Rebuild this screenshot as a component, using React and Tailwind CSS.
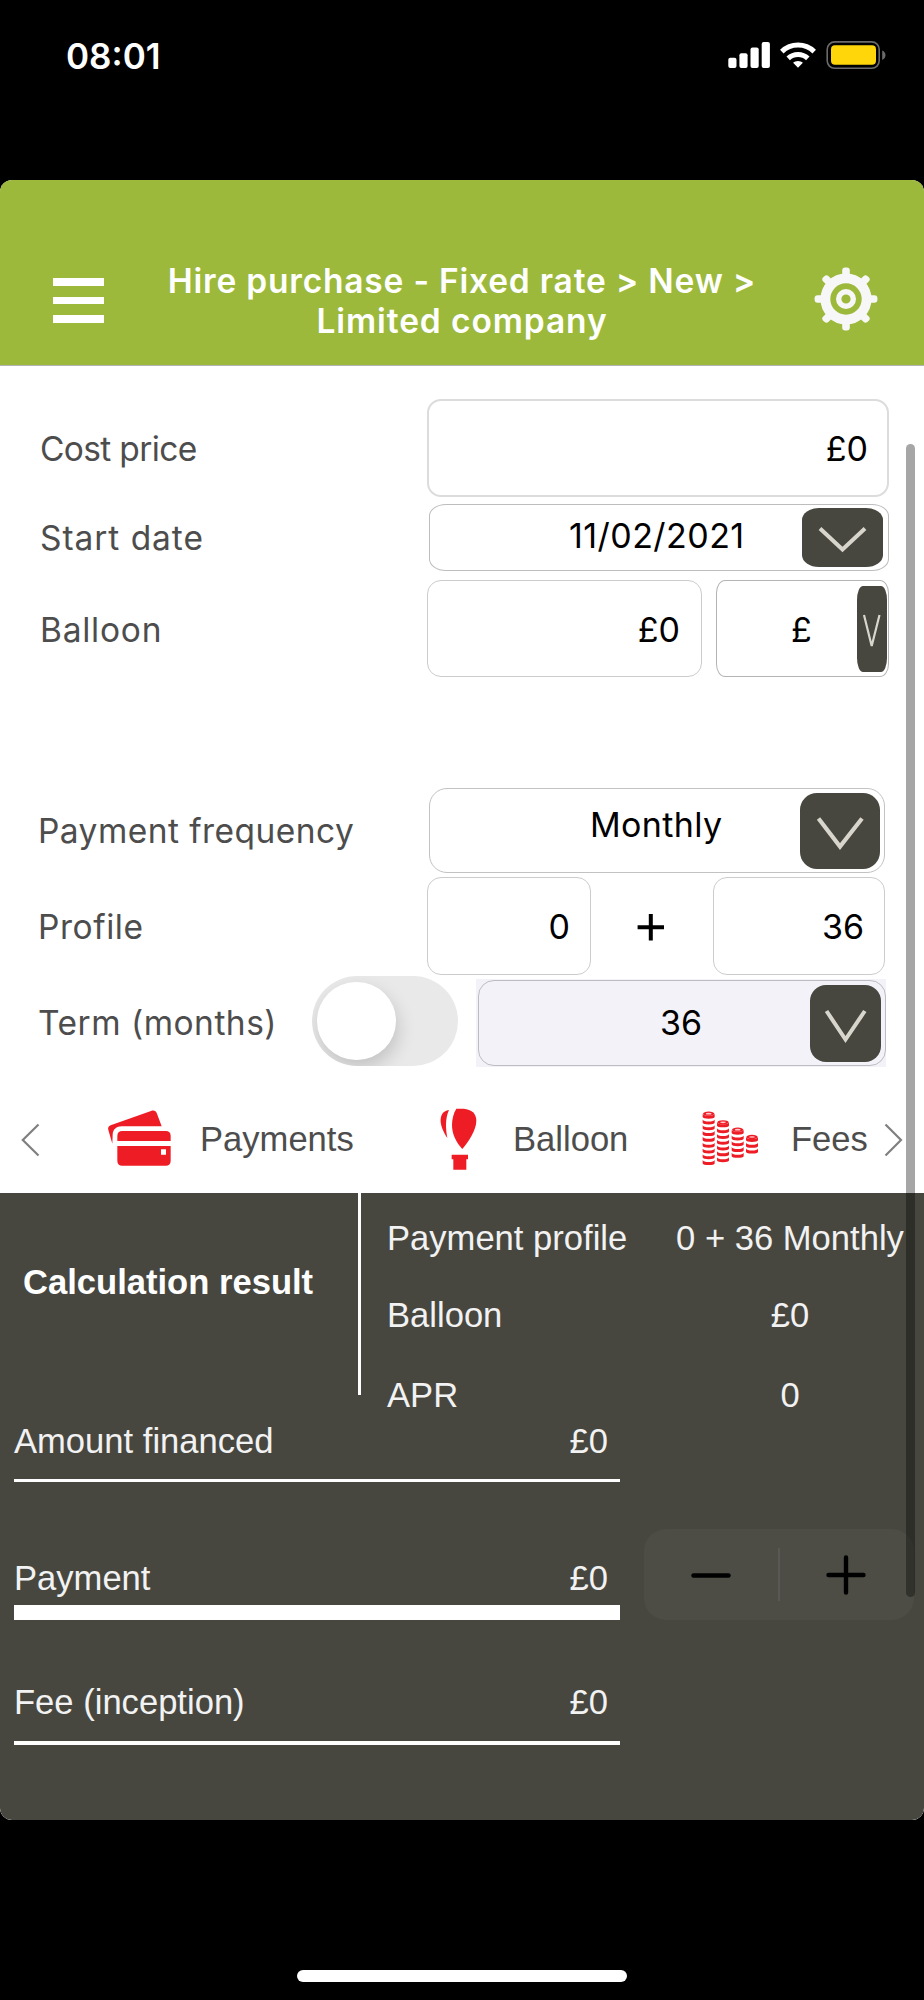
function Chevron({ w, h, points, stroke }) {
  return (
    <svg width={w} height={h} viewBox={`0 0 ${w} ${h}`} fill="none" stroke="#d8d6cc" strokeWidth={stroke}>
      <polyline points={points} />
    </svg>
  );
}

function StatusBar() {
  return (
    <div className="flex h-[110px] items-center justify-between pr-[37px] pl-[66px]">
      <span className="pt-px text-[35px] leading-[40px] font-semibold text-white">08:01</span>
      <svg width="159" height="30" viewBox="728 40 159 30">
        <g fill="#fff">
          <rect x="728.3" y="57.7" width="8.2" height="10.3" rx="2" />
          <rect x="739.4" y="53.2" width="8.2" height="14.8" rx="2" />
          <rect x="750.5" y="47.6" width="8.2" height="20.4" rx="2" />
          <rect x="761.7" y="42" width="8.2" height="26" rx="2" />
          <path d="M798 61c-1.9 0-3.6.7-4.9 1.8l4.9 5 4.9-5c-1.3-1.1-3-1.8-4.9-1.8z" />
        </g>
        <g fill="none" stroke="#fff" strokeWidth="5">
          <path d="M781.8 51.6a23.4 23.4 0 0 1 32.4 0" />
          <path d="M788.2 58.4a14.2 14.2 0 0 1 19.6 0" />
        </g>
        <rect x="827.2" y="41.9" width="52" height="26.4" rx="7.5" fill="none" stroke="#6b6b6b" strokeWidth="1.6" />
        <rect x="831" y="45.3" width="45" height="19.4" rx="4" fill="#ffd60a" />
        <path d="M882.2 50.5c4.4 1.8 4.4 7.6 0 9.4z" fill="#6b6b6b" />
      </svg>
    </div>
  );
}

function Header() {
  return (
    <header className="flex h-[186px] border-b border-[#b4b4b4] bg-[#9cb93c]">
      <div className="mt-[98px] ml-[53px] flex w-[51px] flex-col gap-[11px]">
        <div className="h-[7.5px] bg-white" />
        <div className="h-[7.5px] bg-white" />
        <div className="h-[7.5px] bg-white" />
      </div>
      <h1 className="mt-[81px] ml-[44px] w-[628px] text-center text-[33.5px] leading-[40px] font-semibold whitespace-nowrap text-white">
        <span className="tracking-[0.8px]">Hire purchase - Fixed rate &gt; New &gt;</span>
        <br />
        <span className="tracking-[0.9px]">Limited company</span>
      </h1>
      <svg className="mt-[87px] ml-[38px]" width="64" height="64" viewBox="-32 -32 64 64">
        <g fill="#f7f7f7">
          {[0, 45, 90, 135, 180, 225, 270, 315].map((a) => (
            <rect key={a} x="-3.8" y="-31.4" width="7.6" height="12" rx="3" transform={`rotate(${a})`} />
          ))}
        </g>
        <circle r="20.6" fill="none" stroke="#f7f7f7" strokeWidth="9.8" />
        <circle r="7.3" fill="none" stroke="#f7f7f7" strokeWidth="5.4" />
      </svg>
    </header>
  );
}

function Form() {
  const label = "whitespace-nowrap text-[33.5px] leading-[40px] text-[#4d4d4d]";
  const value = "whitespace-nowrap text-[34px] leading-[40px] text-black";
  return (
    <section className="pt-[33px]">
      <div className="flex h-[98px] items-center pl-[39px]">
        <div className="w-[388px] pt-[2px] pl-px"><span className={`tracking-[-0.65px] ${label}`}>Cost price</span></div>
        <div className="flex h-full w-[462px] items-center justify-end rounded-[14px] border-2 border-[#dcdcdc] pt-[2px] pr-[19px]">
          <span className={value}>£0</span>
        </div>
      </div>

      <div className="mt-[7px] flex h-[67px] items-center pl-[39px]">
        <div className="w-[390px] pl-px"><span className={`tracking-[0.95px] ${label}`}>Start date</span></div>
        <div className="flex h-full w-[460px] items-center rounded-[17px/12px] border border-[#bdbdbd] pr-[5px]">
          <div className="-mt-[4px] flex-1 pl-[139px]"><span className={`tracking-[0.45px] ${value}`}>11/02/2021</span></div>
          <div className="h-[59px] w-[81px] overflow-hidden rounded-[17px/12px] bg-[#474740]">
            <Chevron w={81} h={59} points="18,20.5 40.5,41.5 63,20.5" stroke={4} />
          </div>
        </div>
      </div>

      <div className="mt-[9px] flex h-[97px] items-center pl-[39px]">
        <div className="w-[388px] pt-[2px] pl-px"><span className={`tracking-[0.75px] ${label}`}>Balloon</span></div>
        <div className="flex h-full w-[275px] items-center justify-end rounded-[14px] border border-[#cccccc] pt-[2px] pr-[21px]">
          <span className={value}>£0</span>
        </div>
        <div className="ml-[14px] flex h-full w-[173px] items-center rounded-[9px/13px] border border-[#b4b4b4] pr-px">
          <div className="flex-1 pt-[2px] pl-[74px]"><span className={value}>£</span></div>
          <div className="h-[86px] w-[30px] overflow-hidden rounded-[6px/14px] bg-[#474740]">
            <Chevron w={30} h={86} points="7,29 14.7,60 22.5,29" stroke={2.2} />
          </div>
        </div>
      </div>

      <div className="mt-[111px] flex h-[85px] items-center pl-[37px]">
        <div className="w-[392px] pt-px pl-px"><span className={`tracking-[0.45px] ${label}`}>Payment frequency</span></div>
        <div className="flex h-full w-[456px] items-center rounded-[18px] border border-[#c2c2c2] pr-[4px]">
          <div className="-mt-[12px] flex-1 pl-[160px]"><span className={`tracking-[0.35px] ${value}`}>Monthly</span></div>
          <div className="h-[76px] w-[80px] overflow-hidden rounded-[17px] bg-[#474740]">
            <Chevron w={80} h={76} points="18.5,25.5 40,53.5 62,25.5" stroke={4.2} />
          </div>
        </div>
      </div>

      <div className="mt-[4px] flex h-[98px] items-center pl-[37px]">
        <div className="w-[390px] pt-[2px] pl-px"><span className={`tracking-[0.55px] ${label}`}>Profile</span></div>
        <div className="flex h-full w-[164px] items-center justify-end rounded-[14px] border border-[#cccccc] pt-[2px] pr-[20px]">
          <span className={value}>0</span>
        </div>
        <svg className="mt-[2px] mr-[47px] ml-[45px]" width="30" height="30" viewBox="0 0 30 30" stroke="#000" strokeWidth="4">
          <path d="M1.6 15.2h26.4M14.8 2v26.4" />
        </svg>
        <div className="flex h-full w-[172px] items-center justify-end rounded-[14px] border border-[#cccccc] pt-[2px] pr-[20px]">
          <span className={value}>36</span>
        </div>
      </div>

      <div className="mt-px flex h-[91px] pl-[37px]">
        <div className="mt-[27px] w-[275px] pl-px"><span className={`tracking-[0.5px] ${label}`}>Term (months)</span></div>
        <div className="h-[90px] w-[146px] overflow-hidden rounded-full bg-[#e9e9e9] pt-[6px] pl-[5px]">
          <div className="h-[78px] w-[79px] rounded-full bg-white shadow-[2px_8px_18px_rgba(0,0,0,0.17)]" />
        </div>
        <div className="mt-[3px] ml-[18px] h-[88px] w-[410px] bg-[#f3f2f8] pt-px pl-[2px]">
          <div className="flex h-[86px] w-[408px] items-center rounded-[16px] border border-[#bdbcc2] pr-[4px]">
            <div className="-mt-px flex-1 pl-[181px]"><span className={value}>36</span></div>
            <div className="h-[77px] w-[71px] overflow-hidden rounded-[16px] bg-[#474740]">
              <Chevron w={71} h={77} points="16.5,26 35.5,54.5 54.8,26" stroke={4} />
            </div>
          </div>
        </div>
      </div>
    </section>
  );
}

function CardsIcon() {
  return (
    <svg width="65" height="57" viewBox="320 90 195 171" fill="#ee1c25">
      <path d="M324 150c-2-7 1-12 7-14L452 93c9-3 15 0 18 8l14 38H364c-16 0-26 9-27 24l-1 28z" />
      <path d="M366 153h130q15 0 15 15v15H351v-15q0-15 15-15z" />
      <path fillRule="evenodd" d="M351 198h160v44q0 15-15 15H366q-15 0-15-15zM482 208v16h15v-16z" />
    </svg>
  );
}

function BalloonIcon() {
  return (
    <svg width="37" height="62" viewBox="29 82 111 186" fill="#ee1c25">
      <path d="M56 88C36 91 30 105 31 124c2 18 12 36 20 48-5-28-7-58 5-84z" />
      <path d="M78 84h22c24 2 38 14 38 36 0 28-23 62-42 85-20-22-31-45-31-72 0-19 5-36 13-49z" />
      <path d="M64 222h49v14h-5v31H69v-31h-5z" />
    </svg>
  );
}

const COIN_STACKS = [
  { x: 818, top: 105, count: 9 },
  { x: 861, top: 131, count: 7 },
  { x: 905, top: 153, count: 5 },
  { x: 948, top: 175, count: 3 },
];

function CoinsIcon() {
  return (
    <svg width="57" height="55" viewBox="816 92 171 165" fill="#ee1c25">
      {COIN_STACKS.map(({ x, top, count }) => (
        <g key={x}>
          <ellipse cx={x + 18} cy={top - 5} rx="17" ry="6.5" />
          <ellipse cx={x + 18} cy={top - 5} rx="9" ry="2.5" fill="#fbc9cb" />
          {Array.from({ length: count }, (_, i) => {
            const y = top + i * 17.4 - 5;
            return <path key={i} d={`M${x} ${y}q3 6 18 6t18-6v10q-2 5-18 5t-18-5z`} />;
          })}
        </g>
      ))}
    </svg>
  );
}

function Tabs() {
  const text = "whitespace-nowrap pt-px text-[34.6px] leading-[40px] text-[#4d4d4d]";
  return (
    <nav className="flex h-[126px] items-center pt-[17px] pl-[21px] font-['Liberation_Sans',sans-serif]">
      <svg className="mt-[2px]" width="19" height="34" viewBox="0 0 19 34" fill="none" stroke="#808080" strokeWidth="2.2">
        <path d="M17.5 1.5L1.8 17 17.5 32.5" />
      </svg>
      <div className="ml-[67px] flex w-[333px] items-center">
        <CardsIcon />
        <span className={`ml-[28px] ${text}`}>Payments</span>
      </div>
      <div className="flex w-[262px] items-center">
        <BalloonIcon />
        <span className={`ml-[36px] ${text}`}>Balloon</span>
      </div>
      <div className="flex w-[182px] items-center">
        <CoinsIcon />
        <span className={`ml-[32px] ${text}`}>Fees</span>
      </div>
      <svg className="mt-[2px]" width="19" height="34" viewBox="0 0 19 34" fill="none" stroke="#808080" strokeWidth="2.2">
        <path d="M1.5 1.5L17 17 1.5 32.5" />
      </svg>
    </nav>
  );
}

function Results() {
  const amount = "flex justify-between pr-[12px] leading-[35px]";
  const profile = [
    ["Payment profile", "0 + 36 Monthly", "flex h-[90px] items-center"],
    ["Balloon", "£0", "flex h-[64px] items-center"],
    ["APR", "0", "flex pt-[31px]"],
  ];
  return (
    <section className="h-[627px] rounded-b-[12px] bg-[#474740] font-['Liberation_Sans',sans-serif] text-[34.6px] text-[#f2f2f2]">
      <div className="flex h-[219px]">
        <div className="h-[202px] w-[361px] border-r-[3px] border-white pt-[72px] pl-[23px] leading-[35px] font-bold text-white">
          Calculation result
        </div>
        <div className="pl-[26px] leading-[35px] whitespace-nowrap">
          {profile.map(([name, value, row]) => (
            <div key={name} className={row}>
              <span className="w-[288px]">{name}</span>
              <span className="w-[230px] text-center">{value}</span>
            </div>
          ))}
        </div>
      </div>
      <div className="flex pl-[14px]">
        <div className="w-[606px]">
          <div className={`${amount} h-[67px] pt-[12px]`}><span>Amount financed</span><span>£0</span></div>
          <div className="h-[3px] bg-white" />
          <div className={`${amount} h-[123px] pt-[79px]`}><span>Payment</span><span>£0</span></div>
          <div className="h-[15px] bg-white" />
          <div className={`${amount} h-[121px] pt-[65px]`}><span>Fee (inception)</span><span>£0</span></div>
          <div className="h-[4px] bg-white" />
        </div>
        <div className="mt-[117px] ml-[24px] flex h-[91px] w-[270px] items-center rounded-[22px] bg-[#4d4d46]">
          <svg className="ml-[47px]" width="40" height="40" viewBox="0 0 40 40" stroke="#000" strokeWidth="4.4" strokeLinecap="round">
            <path d="M2.5 20.5h35" />
          </svg>
          <div className="ml-[47px] h-[53px] w-[2px] bg-[#585855]" />
          <svg className="ml-[46px]" width="40" height="40" viewBox="0 0 40 40" stroke="#000" strokeWidth="4.4" strokeLinecap="round">
            <path d="M2.5 20h35M20 2.5v35" />
          </svg>
        </div>
      </div>
    </section>
  );
}

export default function App() {
  return (
    <div className="h-[2000px] w-[924px] overflow-hidden bg-black font-['Inter',sans-serif]">
      <StatusBar />
      <main className="relative mt-[70px] h-[1640px] overflow-hidden rounded-[12px] bg-white">
        <Header />
        <Form />
        <Tabs />
        <Results />
        <div className="absolute top-[264px] left-[906px] h-[1153px] w-[9px] rounded-full bg-black/35" />
      </main>
      <div className="mx-auto mt-[150px] h-[12px] w-[330px] rounded-full bg-white" />
    </div>
  );
}
